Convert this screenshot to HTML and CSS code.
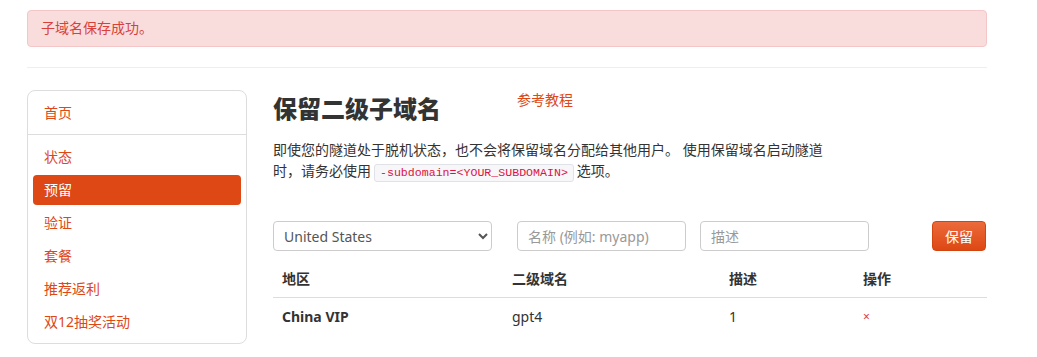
FILE: index.html
```html
<!DOCTYPE html>
<html lang="zh-CN">
<head>
    <meta charset="UTF-8">
    <title>保留二级子域名</title>
    <link rel="stylesheet" href="styles.css">
</head>
<body>
    <div class="container">
        <div class="alert">子域名保存成功。</div>
        <hr class="divider">

        <div class="layout">
            <!-- 左侧菜单 -->
            <div class="sidenav">
                <a class="sidenav-head" href="#">首页</a>
                <ul class="nav-list">
                    <li><a href="#">状态</a></li>
                    <li class="active"><a href="#">预留</a></li>
                    <li><a href="#">验证</a></li>
                    <li><a href="#">套餐</a></li>
                    <li><a href="#">推荐返利</a></li>
                    <li><a href="#">双12抽奖活动</a></li>
                </ul>
            </div>

            <div class="main">
                <div class="title-row">
                    <h1>保留二级子域名</h1>
                    <a class="tutorial" href="#">参考教程</a>
                </div>
                <p class="intro">即使您的隧道处于脱机状态，也不会将保留域名分配给其他用户。 使用保留域名启动隧道时，请务必使用<code>-subdomain=&lt;YOUR_SUBDOMAIN&gt;</code>选项。</p>

                <form class="reserve-form">
                    <select class="field field-region">
                        <option>United States</option>
                        <option>China VIP</option>
                    </select>
                    <input class="field field-name" type="text" placeholder="名称 (例如: myapp)">
                    <input class="field field-desc" type="text" placeholder="描述">
                    <button type="submit" class="btn">保留</button>
                </form>

                <table class="domains">
                    <thead>
                        <tr>
                            <th class="col-region">地区</th>
                            <th class="col-sub">二级域名</th>
                            <th class="col-desc">描述</th>
                            <th>操作</th>
                        </tr>
                    </thead>
                    <tbody>
                        <tr>
                            <td class="strong">China VIP</td>
                            <td>gpt4</td>
                            <td>1</td>
                            <td><a class="remove" href="#">×</a></td>
                        </tr>
                    </tbody>
                </table>
            </div>
        </div>
    </div>
</body>
</html>
```

FILE: styles.css
```css
body {
    margin: 0;
    padding-top: 10px;
    font-family: "Noto Sans", "Noto Sans CJK SC", sans-serif;
    font-size: 14px;
    line-height: 20px;
    color: #333;
    background: #fff;
}
a { color: #dd4814; text-decoration: none; }
.container { width: 960px; margin-left: 27px; }

.alert {
    background-color: #f9dddd;
    border: 1px solid #f4c6c8;
    border-radius: 4px;
    color: #d8413b;
    padding: 7px 13px 8px;
}
.divider { border: 0; border-top: 1px solid #eee; margin: 20px 0 22px; }

.layout { display: flex; gap: 26px; align-items: flex-start; }

.sidenav {
    width: 218px;
    border: 1px solid #ddd;
    border-radius: 8px;
}
.sidenav-head {
    display: block;
    padding: 12px 16px 11px;
    border-bottom: 1px solid #ddd;
}
.nav-list { list-style: none; margin: 0; padding: 7px 5px 6px; }
.nav-list li + li { margin-top: 3px; }
.nav-list a { display: block; padding: 5px 11px; border-radius: 4px; }
.nav-list .active a { background-color: #dd4814; color: #fff; }

.main { width: 714px; }
.title-row { display: flex; align-items: flex-start; }
.title-row h1 {
    width: 244px;
    margin: 6px 0 0;
    font-size: 24px;
    line-height: 26px;
    font-weight: 800;
    color: #333;
}
.intro { width: 560px; height: 42px; margin: 17px 0 40px; line-height: 21px; }
code {
    display: inline-block;
    font-family: "Liberation Mono", monospace;
    font-size: 11.6px;
    line-height: 16px;
    color: #dd1144;
    background-color: #f7f7f9;
    border: 1px solid #e1e1e8;
    border-radius: 3px;
    padding: 0 5px;
    margin: 0 3px;
}

.reserve-form { display: flex; align-items: center; height: 30px; }
.field {
    box-sizing: border-box;
    height: 30px;
    border: 1px solid #ccc;
    border-radius: 4px;
    padding: 4px 10px;
    font-family: inherit;
    font-size: 14px;
    color: #555;
    background: #fff;
}
.field::placeholder { color: #999; }
.field-region { width: 219px; margin-right: 25px; padding-left: 6px; }
.field-name { width: 169px; margin-right: 14px; }
.field-desc { width: 169px; margin-right: 63px; }
.btn {
    height: 30px;
    padding: 0 12px;
    border: 1px solid #d2450f;
    border-radius: 4px;
    color: #fff;
    font-family: inherit;
    font-size: 14px;
    background: linear-gradient(#ec6a3b, #dd4814);
}

.domains { width: 714px; border-collapse: collapse; margin-top: 10px; }
.domains th, .domains td { text-align: left; padding: 8px 9px; line-height: 20px; }
.domains th { font-weight: bold; border-bottom: 1px solid #ddd; }
.col-region { width: 212px; }
.col-sub { width: 199px; }
.col-desc { width: 116px; }
.strong { font-weight: bold; }
.remove { color: #e0402a; font-size: 12px; }
```
